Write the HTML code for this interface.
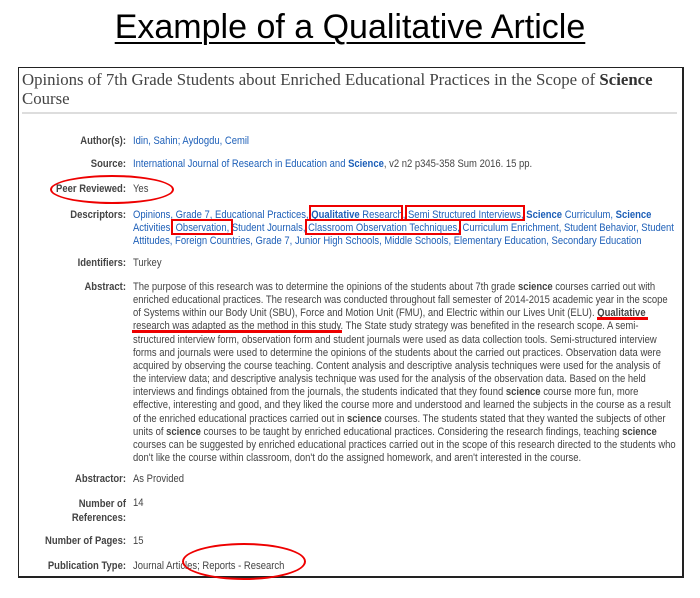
<!DOCTYPE html>
<html><head><meta charset="utf-8"><style>
body{margin:0;width:700px;height:598px;background:#fff;position:relative;overflow:hidden;font-family:"Liberation Sans",Arial,sans-serif;}
.h{position:absolute;left:0;width:700px;top:8px;text-align:center;font-size:34px;text-decoration:underline;text-decoration-thickness:2px;text-underline-offset:4px;color:#000;}
.box{position:absolute;left:18px;top:67px;width:663px;height:508px;border:1px solid #222;border-width:1px 2px 2px 1px;}
.rule{position:absolute;left:22px;top:112px;width:655px;height:2px;background:#ddd;}
.w{position:absolute;left:0;top:0;width:814px;height:598px;transform:scaleX(0.86);transform-origin:0 0;}
.t{position:absolute;left:22px;top:70px;white-space:nowrap;font-family:"Liberation Serif",serif;font-size:16.8px;line-height:19px;color:#444;}
.l{position:absolute;width:146.5px;left:0;text-align:right;font-weight:bold;font-size:11px;color:#444;line-height:13px;}
.v{position:absolute;left:154.65px;white-space:nowrap;font-size:11px;color:#444;line-height:13px;}
.a{color:#1d5fb8;}
.ab{line-height:13.15px;}
.r{position:absolute;border:2.5px solid #e00;}
.e{position:absolute;border:2.5px solid #e00;border-radius:50%;}
.u{position:absolute;height:2.5px;background:#e00;}
</style></head><body>
<div class="h">Example of a Qualitative Article</div>
<div class="box"></div>
<div class="rule"></div>
<div class="t">Opinions of 7th Grade Students about Enriched Educational Practices in the Scope of <b style="color:#333">Science</b><br>Course</div>
<div class="w">
<div class="l" style="top:135px">Author(s):</div><div class="v a" style="top:135px">Idin, Sahin; Aydogdu, Cemil</div>
<div class="l" style="top:158px">Source:</div><div class="v" style="top:158px"><span class="a">International Journal of Research in Education and <b>Science</b></span>, v2 n2 p345-358 Sum 2016. 15 pp.</div>
<div class="l" style="top:183px">Peer Reviewed:</div><div class="v" style="top:183px">Yes</div>
<div class="l" style="top:209px">Descriptors:</div><div class="v a" style="top:209px">Opinions, Grade 7, Educational Practices, <b>Qualitative</b> Research, Semi Structured Interviews, <b>Science</b> Curriculum, <b>Science</b><br>Activities, Observation, Student Journals, Classroom Observation Techniques, Curriculum Enrichment, Student Behavior, Student<br>Attitudes, Foreign Countries, Grade 7, Junior High Schools, Middle Schools, Elementary Education, Secondary Education</div>
<div class="l" style="top:257px">Identifiers:</div><div class="v" style="top:257px">Turkey</div>
<div class="l" style="top:281px">Abstract:</div><div class="v ab" style="top:281px">The purpose of this research was to determine the opinions of the students about 7th grade <b>science</b> courses carried out with<br>enriched educational practices. The research was conducted throughout fall semester of 2014-2015 academic year in the scope<br>of Systems within our Body Unit (SBU), Force and Motion Unit (FMU), and Electric within our Lives Unit (ELU). <b>Qualitative</b><br>research was adapted as the method in this study. The State study strategy was benefited in the research scope. A semi-<br>structured interview form, observation form and student journals were used as data collection tools. Semi-structured interview<br>forms and journals were used to determine the opinions of the students about the carried out practices. Observation data were<br>acquired by observing the course teaching. Content analysis and descriptive analysis techniques were used for the analysis of<br>the interview data; and descriptive analysis technique was used for the analysis of the observation data. Based on the held<br>interviews and findings obtained from the journals, the students indicated that they found <b>science</b> course more fun, more<br>effective, interesting and good, and they liked the course more and understood and learned the subjects in the course as a result<br>of the enriched educational practices carried out in <b>science</b> courses. The students stated that they wanted the subjects of other<br>units of <b>science</b> courses to be taught by enriched educational practices. Considering the research findings, teaching <b>science</b><br>courses can be suggested by enriched educational practices carried out in the scope of this research directed to the students who<br>don't like the course within classroom, don't do the assigned homework, and aren't interested in the course.</div>
<div class="l" style="top:473px">Abstractor:</div><div class="v" style="top:473px">As Provided</div>
<div class="l" style="top:497px;line-height:14px">Number of<br>References:</div><div class="v" style="top:497px">14</div>
<div class="l" style="top:535px">Number of Pages:</div><div class="v" style="top:535px">15</div>
<div class="l" style="top:560px">Publication Type:</div><div class="v" style="top:560px">Journal Articles; Reports - Research</div>
</div>

<div class="e" style="left:50px;top:175px;width:120px;height:25px"></div>
<div class="r" style="left:309px;top:205px;width:90px;height:12px"></div>
<div class="r" style="left:405px;top:205px;width:116px;height:12px"></div>
<div class="r" style="left:171px;top:219px;width:58px;height:12px"></div>
<div class="r" style="left:305px;top:219px;width:152px;height:12px"></div>
<div class="u" style="left:597px;top:317px;width:51px"></div>
<div class="u" style="left:132px;top:330px;width:210px"></div>
<div class="e" style="left:182px;top:543px;width:120px;height:33px"></div>
</body></html>
